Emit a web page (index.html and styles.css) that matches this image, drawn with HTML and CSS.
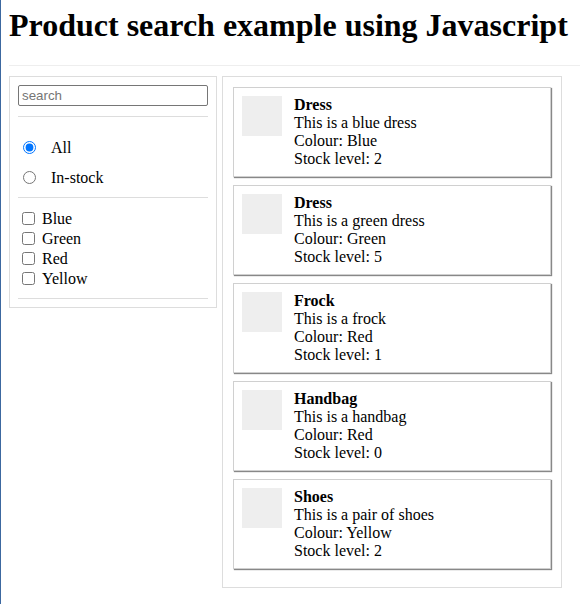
FILE: index.html
```html
<!DOCTYPE html>
<html lang="en">
<head>
<meta charset="utf-8">
<title>Product search example using Javascript</title>
<link rel="stylesheet" href="styles.css">
</head>
<body>
<header class="page-header">
  <h1 class="title">Product search example using Javascript</h1>
</header>
<div class="layout">
  <aside class="filters">
    <input class="search" type="text" placeholder="search">
    <hr class="divider">
    <div class="radio-group">
      <label class="radio-row"><input class="radio" type="radio" name="stock" checked><span class="row-text">All</span></label>
      <label class="radio-row"><input class="radio" type="radio" name="stock"><span class="row-text">In-stock</span></label>
    </div>
    <hr class="divider">
    <div class="check-group">
      <label class="check-row"><input class="check" type="checkbox"><span class="row-text">Blue</span></label>
      <label class="check-row"><input class="check" type="checkbox"><span class="row-text">Green</span></label>
      <label class="check-row"><input class="check" type="checkbox"><span class="row-text">Red</span></label>
      <label class="check-row"><input class="check" type="checkbox"><span class="row-text">Yellow</span></label>
    </div>
    <hr class="divider divider-last">
  </aside>
  <main class="products">
    <div class="card">
      <div class="thumb"></div>
      <div class="info">
        <div class="name">Dress</div>
        <div>This is a blue dress</div>
        <div>Colour: Blue</div>
        <div>Stock level: 2</div>
      </div>
    </div>
    <div class="card">
      <div class="thumb"></div>
      <div class="info">
        <div class="name">Dress</div>
        <div>This is a green dress</div>
        <div>Colour: Green</div>
        <div>Stock level: 5</div>
      </div>
    </div>
    <div class="card">
      <div class="thumb"></div>
      <div class="info">
        <div class="name">Frock</div>
        <div>This is a frock</div>
        <div>Colour: Red</div>
        <div>Stock level: 1</div>
      </div>
    </div>
    <div class="card">
      <div class="thumb"></div>
      <div class="info">
        <div class="name">Handbag</div>
        <div>This is a handbag</div>
        <div>Colour: Red</div>
        <div>Stock level: 0</div>
      </div>
    </div>
    <div class="card">
      <div class="thumb"></div>
      <div class="info">
        <div class="name">Shoes</div>
        <div>This is a pair of shoes</div>
        <div>Colour: Yellow</div>
        <div>Stock level: 2</div>
      </div>
    </div>
  </main>
</div>
</body>
</html>
```

FILE: styles.css
```css
html {
  border-left: 1px solid #3c68a0;
  min-height: 100%;
  box-sizing: border-box;
}

body {
  margin: 8px;
  font-family: "Liberation Serif", "Times New Roman", serif;
  font-size: 16px;
  color: #000;
  background: #fff;
}

.page-header {
  padding-bottom: 22px;
  border-bottom: 1px solid #eeeeee;
  margin-right: -8px;
}

.title {
  margin: 0;
  font-size: 32px;
  font-weight: bold;
  line-height: 35px;
}

.layout {
  display: flex;
  align-items: flex-start;
  gap: 5px;
  margin-top: 10px;
}

.filters {
  box-sizing: border-box;
  width: 208px;
  border: 1px solid #dddddd;
  padding: 8px;
  display: flex;
  flex-direction: column;
}

.search {
  box-sizing: border-box;
  width: 190px;
  height: 21px;
  margin: 0;
  padding: 1px 3px;
  border: 1px solid #767676;
  border-radius: 2px;
  font-family: "Liberation Sans", Arial, sans-serif;
  font-size: 13.33px;
}

.search::placeholder {
  color: #757575;
}

.divider {
  margin: 10px 0;
  border: 0;
  border-top: 1px solid #dddddd;
  height: 0;
}

.divider-last {
  margin-bottom: 0;
}

.radio-group {
  display: flex;
  flex-direction: column;
  gap: 10px;
  padding-top: 10px;
}

.radio-row {
  display: flex;
  align-items: center;
  height: 20px;
  line-height: 18px;
}

.row-text {
  padding-top: 2px;
}

.radio {
  width: 13px;
  height: 13px;
  margin: 0 15px 0 5px;
}

.check-group {
  display: flex;
  flex-direction: column;
}

.check-row {
  display: flex;
  align-items: center;
  height: 20px;
  line-height: 18px;
}

.check {
  width: 13px;
  height: 13px;
  margin: 0 7px 0 4px;
}

.products {
  box-sizing: border-box;
  width: 340px;
  border: 1px solid #dddddd;
  padding: 10px;
}

.card {
  display: flex;
  gap: 12px;
  border: 1px solid #d0d0d0;
  padding: 8px;
  margin-bottom: 8px;
  box-shadow: 1px 1px 1px #888888;
}

.thumb {
  flex: none;
  width: 40px;
  height: 40px;
  background: #eeeeee;
}

.info {
  line-height: 18px;
}

.name {
  font-weight: bold;
}
```
